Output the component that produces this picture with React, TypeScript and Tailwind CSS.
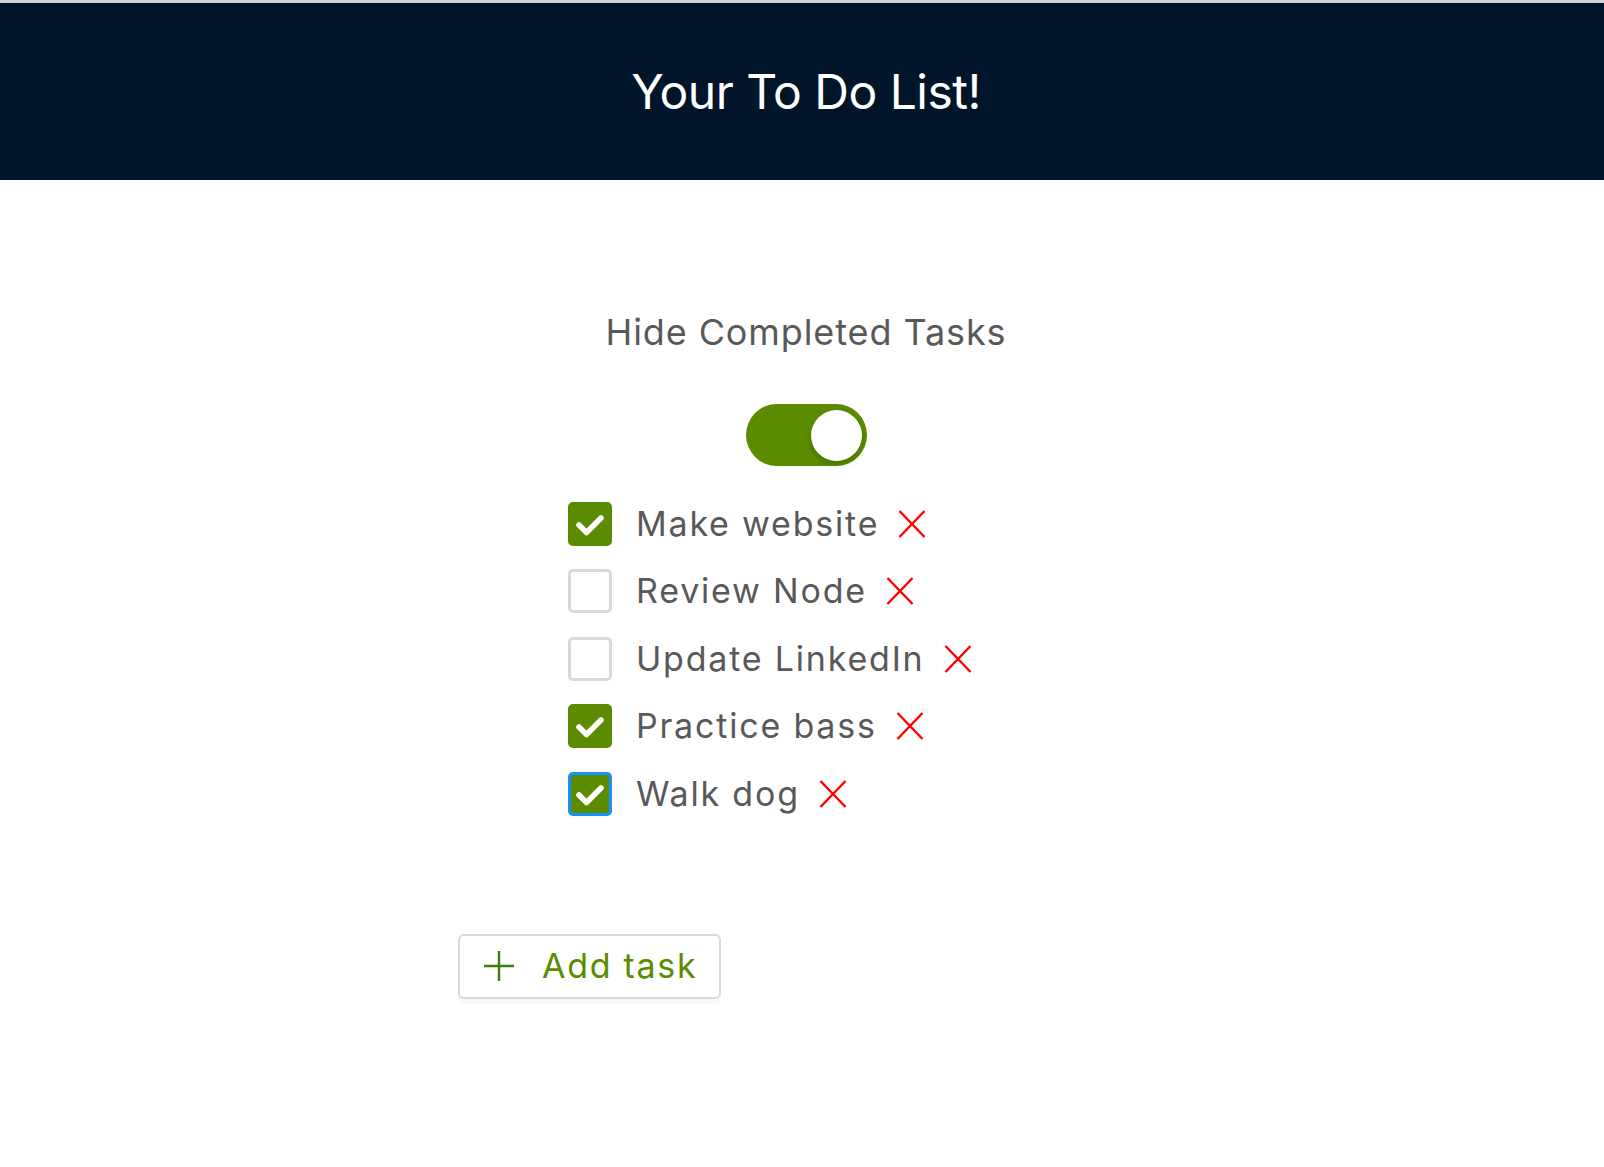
import { useState } from "react";

interface Task {
  id: number;
  title: string;
  done: boolean;
}

const initialTasks: Task[] = [
  { id: 1, title: "Make website", done: true },
  { id: 2, title: "Review Node", done: false },
  { id: 3, title: "Update LinkedIn", done: false },
  { id: 4, title: "Practice bass", done: true },
  { id: 5, title: "Walk dog", done: true },
];

function CheckBox({ checked, focused }: { checked: boolean; focused?: boolean }) {
  return (
    <span
      className={
        checked
          ? focused
            ? "flex h-[44px] w-[44px] items-center justify-center rounded-[5px] border-[3px] border-[#1890ff] bg-[#5b8c00]"
            : "flex h-[44px] w-[44px] items-center justify-center rounded-[5px] border-[3px] border-[#5b8c00] bg-[#5b8c00]"
          : "flex h-[44px] w-[44px] items-center justify-center rounded-[5px] border-[3px] border-[#d9d9d9] bg-white"
      }
    >
      {checked && (
        <svg width="44" height="44" viewBox="0 0 44 44" className="shrink-0">
          <polyline
            points="11,23 18.5,30.5 33,16"
            fill="none"
            stroke="#fff"
            strokeWidth="5.5"
            strokeLinecap="round"
            strokeLinejoin="round"
          />
        </svg>
      )}
    </span>
  );
}

function RemoveIcon() {
  return (
    <svg width="28" height="28" viewBox="0 0 28 28">
      <path d="M1.5 1 L26.5 27 M26.5 1 L1.5 27" stroke="#ff0000" strokeWidth="2.4" fill="none" />
    </svg>
  );
}

export default function App() {
  const [tasks] = useState(initialTasks);

  return (
    <div className="min-h-screen bg-white font-['Inter','Liberation_Sans',sans-serif]">
      <div className="h-[3px] bg-[#d3d3d6]" />

      {/* Header */}
      <header className="flex h-[177px] items-center justify-center bg-[#001529] pl-[8px]">
        <h1 className="text-[48px] leading-[48px] tracking-[-0.5px] text-white">Your To Do List!</h1>
      </header>

      <div className="pl-[8px]">
        <main className="mx-auto w-[696px] pt-[134px]">
          <p className="text-center text-[36px] leading-[36px] tracking-[0.9px] text-[#595959]">Hide Completed Tasks</p>

          {/* Switch */}
          <div className="mt-[54px] flex justify-center">
            <button className="relative h-[62px] w-[121px] rounded-full bg-[#5b8c00]">
              <span className="absolute right-[5px] top-[5.5px] h-[51px] w-[51px] rounded-full bg-white shadow-[0_3px_6px_rgba(0,35,11,0.25)]" />
            </button>
          </div>

          {/* Tasks */}
          <ul className="mt-[24px] pl-[110px]">
            {tasks.map((task) => (
              <li key={task.id} className="flex h-[67.5px] items-center">
                <CheckBox checked={task.done} focused={task.id === 5} />
                <span className="ml-[24px] text-[34px] leading-[34px] tracking-[1.8px] text-[#595959]">{task.title}</span>
                <span className="ml-[19px] flex">
                  <RemoveIcon />
                </span>
              </li>
            ))}
          </ul>

          {/* Add */}
          <button className="mt-[106px] flex h-[65px] w-[263px] items-center rounded-[6px] border-[2px] border-[#d9d9d9] bg-white pl-[23px] shadow-[0_5px_0_rgba(0,0,0,0.03)]">
            <svg width="32" height="32" viewBox="0 0 32 32">
              <path d="M16 1 V31 M1 16 H31" stroke="#3f7d0a" strokeWidth="2.4" fill="none" />
            </svg>
            <span className="ml-[27px] text-[34px] leading-[34px] tracking-[1.7px] text-[#5b8c00]">Add task</span>
          </button>
        </main>
      </div>
    </div>
  );
}
